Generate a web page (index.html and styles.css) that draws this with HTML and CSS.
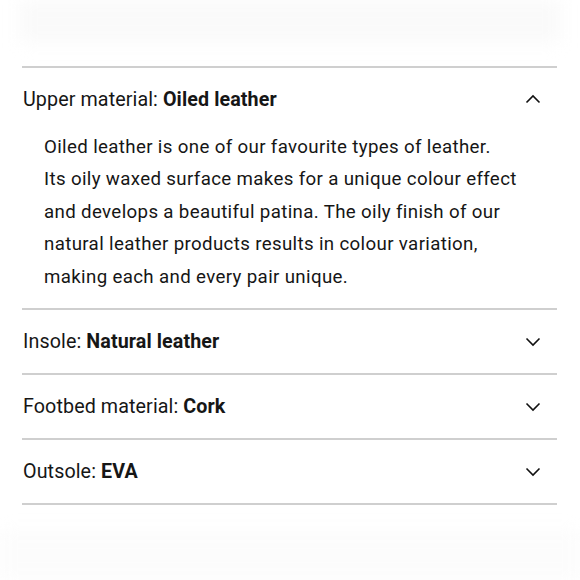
FILE: index.html
```html
<!DOCTYPE html>
<html lang="en">
<head>
<meta charset="utf-8">
<link rel="stylesheet" href="styles.css">
</head>
<body>
<div class="page">
  <div class="fade fade-top"></div>
  <div class="accordion">
    <div class="item open">
      <div class="head">
        <span class="label">Upper material: <b>Oiled leather</b></span>
        <svg class="chev" width="16" height="10" viewBox="0 0 16 10"><path d="M1.5 8.5 L8 2 L14.5 8.5" fill="none" stroke="#111" stroke-width="1.6"/></svg>
      </div>
      <div class="body">
        <p>Oiled leather is one of our favourite types of leather.<br>Its oily waxed surface makes for a unique colour effect<br>and develops a beautiful patina. The oily finish of our<br>natural leather products results in colour variation,<br>making each and every pair unique.</p>
      </div>
    </div>
    <div class="item">
      <div class="head">
        <span class="label">Insole: <b>Natural leather</b></span>
        <svg class="chev" width="16" height="10" viewBox="0 0 16 10"><path d="M1.5 1.5 L8 8 L14.5 1.5" fill="none" stroke="#111" stroke-width="1.6"/></svg>
      </div>
    </div>
    <div class="item">
      <div class="head">
        <span class="label">Footbed material: <b>Cork</b></span>
        <svg class="chev" width="16" height="10" viewBox="0 0 16 10"><path d="M1.5 1.5 L8 8 L14.5 1.5" fill="none" stroke="#111" stroke-width="1.6"/></svg>
      </div>
    </div>
    <div class="item last">
      <div class="head">
        <span class="label">Outsole: <b>EVA</b></span>
        <svg class="chev" width="16" height="10" viewBox="0 0 16 10"><path d="M1.5 1.5 L8 8 L14.5 1.5" fill="none" stroke="#111" stroke-width="1.6"/></svg>
      </div>
    </div>
  </div>
  <div class="fade fade-bottom"></div>
</div>
</body>
</html>
```
FILE: styles.css
```css
* { box-sizing: border-box; }
html, body { margin: 0; padding: 0; background: #fff; }
body {
  font-family: Roboto, "Liberation Sans", sans-serif;
  color: #161616;
  width: 580px;
  height: 580px;
  overflow: hidden;
}
.page {
  display: flex;
  flex-direction: column;
  height: 580px;
}
.fade {
  filter: blur(8px);
}
.fade-top {
  height: 44px;
  margin: 0 20px 23px 20px;
  background: #fafafa;
}
.fade-bottom {
  height: 50px;
  margin-top: 26px;
  background: #fcfcfc;
}
.accordion {
  margin: 0 23px 0 22px;
}
.item {
  border-top: 2px solid #cfcfcf;
}
.item.last {
  border-bottom: 2px solid #cfcfcf;
}
.head {
  height: 63px;
  display: flex;
  align-items: center;
  justify-content: space-between;
  padding: 0 16px 0 1px;
}
.label {
  font-size: 19.7px;
  letter-spacing: 0.1px;
}
.label b { font-weight: 700; }
.chev { display: block; }
.body {
  padding: 0 0 15px 22px;
}
.body p {
  margin: 0;
  font-size: 18.7px;
  line-height: 32.5px;
  letter-spacing: 0.35px;
}
```
